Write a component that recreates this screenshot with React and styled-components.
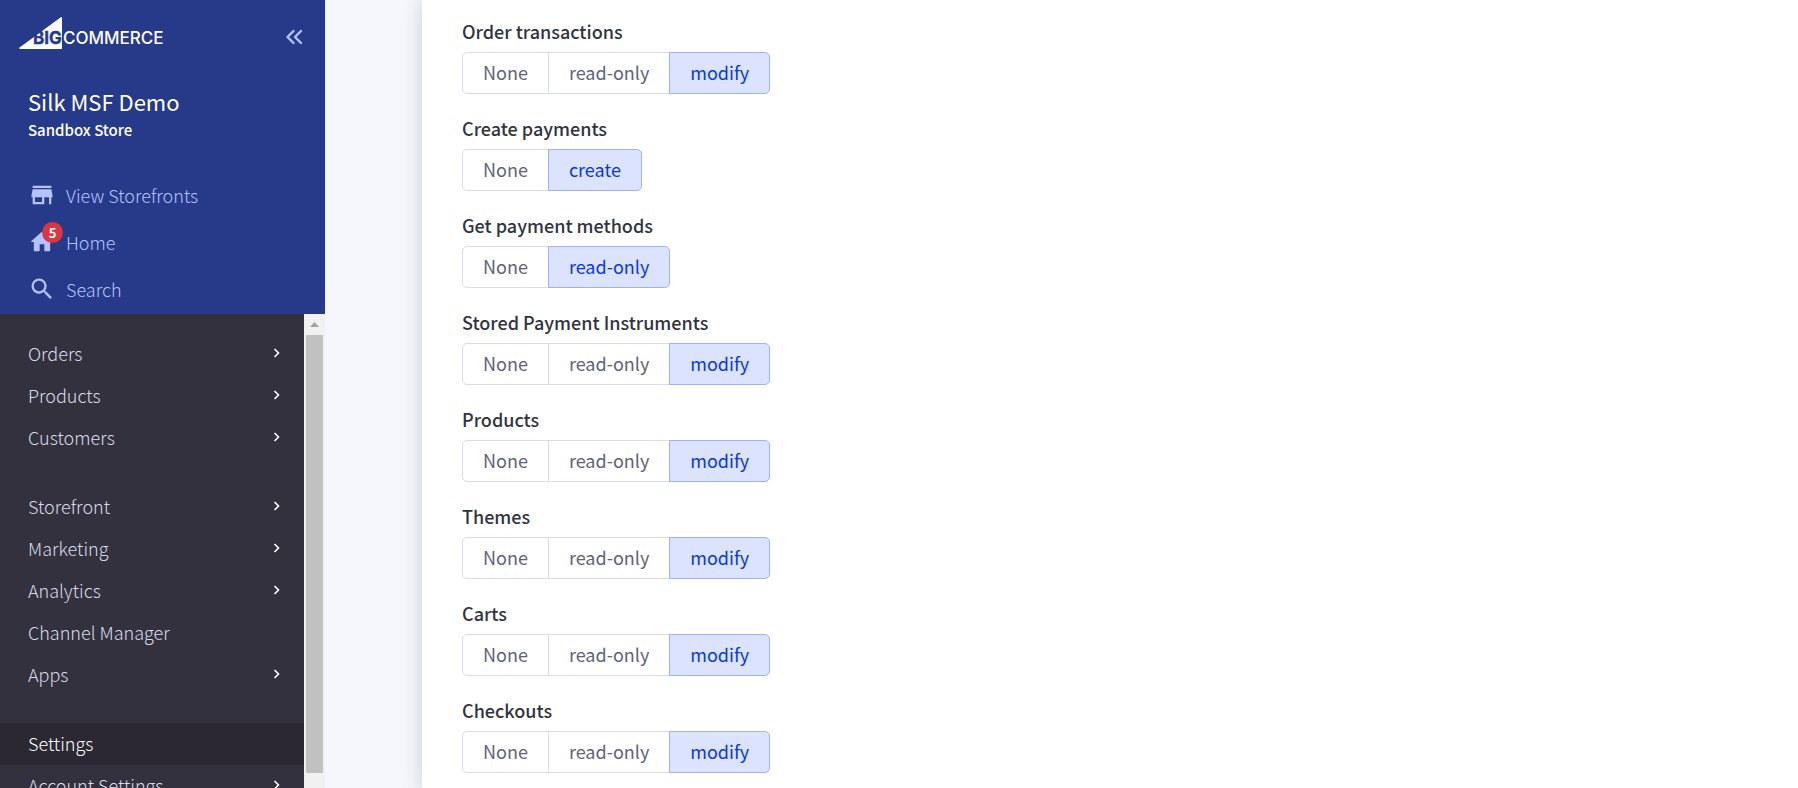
import React, { useState } from "react";
import styled, { createGlobalStyle } from "styled-components";
import { MdStore, MdSearch } from "react-icons/md";

const GlobalStyle = createGlobalStyle`
  * {
    box-sizing: border-box;
  }
  body {
    margin: 0;
    background-color: #f6f7fc;
    font-family: "Noto Sans CJK JP", "Noto Sans", sans-serif;
    font-size: 18px;
    line-height: 24px;
  }
`;

const Page = styled.div`
  display: flex;
  height: 100vh;
  overflow: hidden;
`;

const Sidebar = styled.aside`
  display: flex;
  flex-direction: column;
  flex: none;
  width: 325px;
`;

const Header = styled.header`
  flex: none;
  background-color: #273a8a;
  color: #b4c3ff;
`;

const TopBar = styled.div`
  display: flex;
  align-items: center;
  justify-content: space-between;
  height: 66px;
  padding: 0 18px;
`;

const LogoLink = styled.a`
  display: flex;
`;

const CollapseButton = styled.button`
  display: flex;
  padding: 8px 0 0;
  border: none;
  background: none;
  color: inherit;
  cursor: pointer;
`;

const Store = styled.div`
  padding: 20px 28px 0;
  color: #ffffff;
`;

const StoreName = styled.h1`
  margin: 0;
  font-size: 22px;
  font-weight: 400;
  line-height: 30px;
`;

const StoreType = styled.p`
  margin: 0;
  font-size: 15px;
  font-weight: 500;
  line-height: 28px;
`;

const Shortcuts = styled.nav`
  padding: 27px 28px 2px;
`;

const Shortcut = styled.a`
  display: flex;
  align-items: center;
  gap: 10px;
  height: 47px;
  color: inherit;
  font-weight: 300;
  text-decoration: none;
`;

const IconBox = styled.span`
  position: relative;
  display: flex;
  font-size: 28px;
`;

const Badge = styled.span`
  position: absolute;
  top: -6px;
  right: -7px;
  width: 21px;
  height: 21px;
  border-radius: 50%;
  background-color: #db3643;
  color: #ffffff;
  font-size: 13px;
  font-weight: 700;
  line-height: 21px;
  text-align: center;
`;

const MenuArea = styled.div`
  display: flex;
  flex: 1;
  min-height: 0;
  background-color: #34313f;
`;

const Menu = styled.nav`
  display: flex;
  flex: 1;
  flex-direction: column;
  gap: 27px;
  padding-top: 19px;
  overflow: hidden;
`;

const MenuItem = styled.a`
  display: flex;
  align-items: center;
  justify-content: space-between;
  height: 42px;
  padding: 0 24px 2px 28px;
  background-color: ${({ $active }) => ($active ? "#2b2833" : "transparent")};
  color: ${({ $active }) => ($active ? "#ffffff" : "#d9dce9")};
  font-weight: 300;
  text-decoration: none;
`;

const ScrollBar = styled.div`
  display: flex;
  flex-direction: column;
  width: 21px;
  padding: 0 2px 15px;
  background-color: #f1f1f1;
`;

const ScrollArrow = styled.div`
  display: flex;
  align-items: center;
  justify-content: center;
  height: 21px;
`;

const ScrollThumb = styled.div`
  flex: 1;
  background-color: #c1c1c1;
`;

const Content = styled.main`
  flex: 1;
  padding-left: 97px;
`;

const Panel = styled.form`
  display: flex;
  flex-direction: column;
  gap: 23px;
  min-height: 100%;
  padding: 20px 40px;
  background-color: #ffffff;
  box-shadow: 0 0 20px rgba(49, 52, 64, 0.2);
`;

const Field = styled.fieldset`
  min-width: 0;
  margin: 0;
  padding: 0;
  border: none;
`;

const Legend = styled.legend`
  margin-bottom: 9px;
  padding: 0;
  color: #313440;
  font-weight: 500;
  line-height: 23px;
`;

const Options = styled.div`
  display: flex;
`;

const Option = styled.label`
  display: flex;
  align-items: center;
  height: 42px;
  padding: 0 20px 2px;
  border: 1px solid ${({ $checked }) => ($checked ? "#9db2fb" : "#d9dce9")};
  background-color: ${({ $checked }) => ($checked ? "#dbe3fe" : "#ffffff")};
  color: ${({ $checked }) => ($checked ? "#0b38d9" : "#5e637a")};
  z-index: ${({ $checked }) => ($checked ? 1 : 0)};
  cursor: pointer;

  &:not(:first-child) {
    margin-left: -1px;
  }
  &:first-child {
    border-radius: 5px 0 0 5px;
  }
  &:last-child {
    border-radius: 0 5px 5px 0;
  }
`;

const Radio = styled.input`
  position: absolute;
  appearance: none;
  margin: 0;
  opacity: 0;
`;

const menuGroups = [
  [
    { label: "Orders", expandable: true },
    { label: "Products", expandable: true },
    { label: "Customers", expandable: true },
  ],
  [
    { label: "Storefront", expandable: true },
    { label: "Marketing", expandable: true },
    { label: "Analytics", expandable: true },
    { label: "Channel Manager" },
    { label: "Apps", expandable: true },
  ],
  [
    { label: "Settings", active: true },
    { label: "Account Settings", expandable: true },
  ],
];

const scopes = [
  { label: "Order transactions", options: ["None", "read-only", "modify"] },
  { label: "Create payments", options: ["None", "create"] },
  { label: "Get payment methods", options: ["None", "read-only"] },
  {
    label: "Stored Payment Instruments",
    options: ["None", "read-only", "modify"],
  },
  { label: "Products", options: ["None", "read-only", "modify"] },
  { label: "Themes", options: ["None", "read-only", "modify"] },
  { label: "Carts", options: ["None", "read-only", "modify"] },
  { label: "Checkouts", options: ["None", "read-only", "modify"] },
];

const Logo = () => (
  <svg width="148" height="34" viewBox="0 0 148 34" role="img">
    <path
      d="M1.600 31.600 42.800 1.300Q44 .6 44 2V33H2Q.4 32.800 1.600 31.600Z"
      fill="#fff"
    />
    <g fontFamily="Inter, sans-serif" fontSize="17">
      <text
        x="15"
        y="28"
        fontWeight="700"
        fill="#273a8a"
        stroke="#273a8a"
        strokeWidth="0.4"
      >
        BIG
      </text>
      <text x="45" y="28" fontWeight="500" fill="#fff">
        COMMERCE
      </text>
    </g>
  </svg>
);

const HomeIcon = () => (
  <svg width="28" height="28" viewBox="0 0 24 24" fill="currentColor">
    <path d="M10 19v-5h4v5c0 .55.45 1 1 1h3c.55 0 1-.45 1-1v-7h1.700c.46 0 .68-.57.33-.87L12.670 3.600c-.38-.34-.96-.34-1.340 0l-8.360 7.530c-.34.3-.13.87.33.87H5v7c0 .55.45 1 1 1h3c.55 0 1-.45 1-1z" />
  </svg>
);

const Chevron = () => (
  <svg width="7" height="10" viewBox="0 0 7 10" fill="none">
    <path d="M1.500 1l4 4-4 4" stroke="#fff" strokeWidth="1.600" />
  </svg>
);

const DoubleChevron = () => (
  <svg width="24" height="20" viewBox="0 0 24 20" fill="none">
    <path
      d="M10.500 4l-6 6 6 6M18 4l-6 6 6 6"
      stroke="currentColor"
      strokeWidth="2.400"
      strokeLinecap="round"
      strokeLinejoin="round"
    />
  </svg>
);

const ScopeField = ({ label, options }) => {
  const [value, setValue] = useState(options[options.length - 1]);

  return (
    <Field>
      <Legend>{label}</Legend>
      <Options>
        {options.map((option) => (
          <Option key={option} $checked={option === value}>
            <Radio
              type="radio"
              name={label}
              checked={option === value}
              onChange={() => setValue(option)}
            />
            {option}
          </Option>
        ))}
      </Options>
    </Field>
  );
};

const App = () => {
  return (
    <Page>
      <GlobalStyle />
      <Sidebar>
        <Header>
          <TopBar>
            <LogoLink href="#">
              <Logo />
            </LogoLink>
            <CollapseButton type="button" aria-label="Collapse menu">
              <DoubleChevron />
            </CollapseButton>
          </TopBar>
          <Store>
            <StoreName>Silk MSF Demo</StoreName>
            <StoreType>Sandbox Store</StoreType>
          </Store>
          <Shortcuts>
            <Shortcut href="#">
              <IconBox>
                <MdStore />
              </IconBox>
              View Storefronts
            </Shortcut>
            <Shortcut href="#">
              <IconBox>
                <HomeIcon />
                <Badge>5</Badge>
              </IconBox>
              Home
            </Shortcut>
            <Shortcut href="#">
              <IconBox>
                <MdSearch />
              </IconBox>
              Search
            </Shortcut>
          </Shortcuts>
        </Header>
        <MenuArea>
          <Menu>
            {menuGroups.map((group) => (
              <div key={group[0].label}>
                {group.map((item) => (
                  <MenuItem key={item.label} href="#" $active={item.active}>
                    {item.label}
                    {item.expandable && <Chevron />}
                  </MenuItem>
                ))}
              </div>
            ))}
          </Menu>
          <ScrollBar aria-hidden="true">
            <ScrollArrow>
              <svg width="9" height="5" viewBox="0 0 9 5">
                <path d="M0 5l4.500-5L9 5z" fill="#a3a3a3" />
              </svg>
            </ScrollArrow>
            <ScrollThumb />
          </ScrollBar>
        </MenuArea>
      </Sidebar>
      <Content>
        <Panel>
          {scopes.map((scope) => (
            <ScopeField key={scope.label} {...scope} />
          ))}
        </Panel>
      </Content>
    </Page>
  );
};

export default App;
